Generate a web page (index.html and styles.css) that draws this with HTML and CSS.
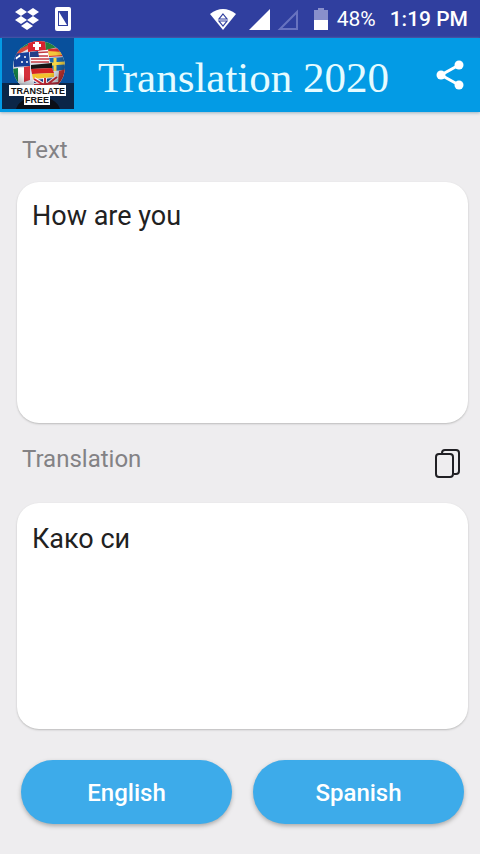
FILE: index.html
```html
<!DOCTYPE html>
<html lang="en">
<head>
    <meta charset="UTF-8">
    <meta name="viewport" content="width=device-width, initial-scale=1.0">
    <title>Translation 2020</title>
    <link rel="stylesheet" href="styles.css">
</head>
<body>
    <div class="status-bar">
        <svg class="dropbox" width="24" height="22" viewBox="0 0 24 22" fill="#fff">
            <path d="M6 0l6 4-6 4-6-4zM18 0l6 4-6 4-6-4zM6 8l6 4-6 4-6-4zM18 8l6 4-6 4-6-4zM12 14l6 4-6 4-6-4z"/>
        </svg>
        <svg class="phone" width="16" height="24" viewBox="0 0 16 24">
            <rect width="16" height="24" rx="2" fill="#fff"/>
            <path d="M3 4h10v15H3z" fill="#303f9f"/>
            <path d="M4 5l8 13H4z" fill="#fff"/>
        </svg>
        <svg class="wifi" width="26" height="21" viewBox="0 0 26 21">
            <path d="M0 5Q13-5 26 5L13 21z" fill="#fff"/>
            <path d="M13 5l4 5H9zM9 12h8l-4 5z" fill="#fff" stroke="#303f9f" stroke-width="1.2"/>
        </svg>
        <svg class="signal" width="21" height="21" viewBox="0 0 21 21">
            <path d="M21 0v21H0z" fill="#fff"/>
        </svg>
        <svg class="signal-empty" width="21" height="21" viewBox="0 0 21 21">
            <path d="M20 3v17H3z" fill="none" stroke="#6873c0" stroke-width="2"/>
        </svg>
        <svg class="battery" width="14" height="22" viewBox="0 0 14 22">
            <path d="M4 0h6v2h4v11H0V2h4z" fill="#8990cb"/>
            <path d="M0 12h14v10H0z" fill="#fff"/>
        </svg>
        <span class="percent">48%</span>
        <span class="clock">1:19 PM</span>
    </div>

    <header>
        <svg class="logo" width="72" height="71" viewBox="0 0 72 71">
            <defs>
                <clipPath id="globe"><circle cx="37" cy="29" r="26"/></clipPath>
                <radialGradient id="shine" cx=".45" cy=".35" r=".65">
                    <stop offset=".6" stop-color="#000" stop-opacity="0"/>
                    <stop offset="1" stop-color="#001" stop-opacity=".4"/>
                </radialGradient>
            </defs>
            <rect width="72" height="71" fill="#08509c"/>
            <path d="M0 45h72v26H0z" fill="#0b2647"/>
            <g clip-path="url(#globe)">
                <path d="M10 2h54v54H10z" fill="#dfe3ea"/>
                <!-- top row -->
                <path d="M10 8l14-6 3 6-15 8z" fill="#1d8a47"/>
                <path d="M12 14l14-7v4L13 18z" fill="#d9473b"/>
                <path d="M26 2h17l1 10-18 2z" fill="#d8232f"/>
                <path d="M33 4h4v8h-4zM31 6h8v3h-8z" fill="#fff"/>
                <path d="M43 2l13 7-12 3z" fill="#25813d"/>
                <path d="M46 11l13-1 4 8-16 1z" fill="#d92b2f"/>
                <path d="M46 13l15 1 1 3-15 1z" fill="#f5c63c"/>
                <!-- middle row -->
                <path d="M11 16l16-2 1 14-16 1z" fill="#16409a"/>
                <path d="M14 20l4-2M18 17l-4 4M23 18v2M20 23v2M25 23v2" stroke="#fff" stroke-width="1.5"/>
                <path d="M28 14l18-2 1 12-18 1z" fill="#fff"/>
                <path d="M28 15l18-1M28 18h18M29 21h18M29 24h18" stroke="#c33a42" stroke-width="1.5"/>
                <path d="M28 14l8-1 1 6h-9z" fill="#263f88"/>
                <path d="M47 20l16-1v13l-12 1z" fill="#1c69b0"/>
                <path d="M53 20v13M48 26l15-1" stroke="#f7d646" stroke-width="3"/>
                <!-- bottom row -->
                <path d="M11 31l5-1v16l-5-3z" fill="#16894b"/>
                <path d="M16 30h6v15h-6z" fill="#fff"/>
                <path d="M22 29l6-1v14l-6 2z" fill="#d4303a"/>
                <path d="M29 27l21-2v5l-21 1z" fill="#171515"/>
                <path d="M29 31l21-1 2 5-22 1z" fill="#d42424"/>
                <path d="M30 36l22-1v4l-21 2z" fill="#f3c22b"/>
                <path d="M32 42l20-2 3 16H32z" fill="#203f8f"/>
                <path d="M32 41l23 14M55 39L34 55M43 40v15M32 47l25-2" stroke="#fff" stroke-width="4"/>
                <path d="M32 41l23 14M55 39L34 55M43 40v15M32 47l25-2" stroke="#cf2c3a" stroke-width="2"/>
                <path d="M57 33l7-2-3 17-5-2z" fill="#d63932"/>
                <circle cx="37" cy="29" r="26" fill="url(#shine)"/>
            </g>
            <path d="M14 71q4-12 22-12t22 12z" fill="#0b0f17"/>
            <path d="M7 47h57v11H7zM22 57h26v10H22z" fill="#fff"/>
            <text x="36" y="56">TRANSLATE</text>
            <text x="35" y="65">FREE</text>
        </svg>
        <h1>Translation 2020</h1>
        <button class="icon-button share" aria-label="Share">
            <svg width="28" height="30" viewBox="0 0 28 30" fill="#fff">
                <path d="M23 5L5 15l18 10" fill="none" stroke="#fff" stroke-width="3"/>
                <circle cx="23" cy="5" r="4.5"/>
                <circle cx="5" cy="15" r="4.5"/>
                <circle cx="23" cy="25" r="4.5"/>
            </svg>
        </button>
    </header>

    <main>
        <label for="source">Text</label>
        <textarea id="source" class="source">How are you</textarea>
        <div class="result-row">
            <label for="result">Translation</label>
            <button class="icon-button" aria-label="Copy translation">
                <svg width="26" height="30" viewBox="0 0 26 30" fill="none" stroke="#202024" stroke-width="2">
                    <path d="M7 4q0-3 3-3h11q3 0 3 3v18q0 3-3 3h-2"/>
                    <rect x="1" y="5" width="17" height="23" rx="3"/>
                </svg>
            </button>
        </div>
        <textarea id="result" class="result" readonly>Како си</textarea>
        <div class="languages">
            <button>English</button>
            <button>Spanish</button>
        </div>
    </main>
</body>
</html>
```
FILE: styles.css
```css
* {
    box-sizing: border-box;
}
body {
    margin: 0;
    min-height: 100vh;
    display: flex;
    flex-direction: column;
    font-family: Roboto, sans-serif;
    background: #eeedef;
}
svg {
    display: block;
    flex: none;
}
button {
    border: none;
    cursor: pointer;
}
.status-bar {
    display: flex;
    align-items: center;
    height: 38px;
    padding: 0 12px 0 15px;
    background: #303f9f;
    color: #fff;
    font-size: 21px;
}
.phone {
    margin-left: 16px;
}
.wifi {
    margin-left: auto;
}
.signal {
    margin-left: 13px;
}
.signal-empty {
    margin-left: 7px;
}
.battery {
    margin-left: 16px;
}
.percent {
    margin-left: 9px;
}
.clock {
    margin-left: 14px;
    font-weight: 500;
}
header {
    display: flex;
    align-items: flex-start;
    height: 74px;
    padding: 0 16px 0 2px;
    background: #039be5;
    box-shadow: 0 1px 3px #9ab4c0;
}
.logo text {
    font-family: "Liberation Sans", sans-serif;
    font-size: 9px;
    font-weight: bold;
    text-anchor: middle;
    fill: #111;
}
h1 {
    flex: 1;
    margin: 0 0 0 24px;
    font-family: "Liberation Serif", serif;
    font-size: 43px;
    font-weight: normal;
    line-height: 80px;
    white-space: nowrap;
    color: #e6fbff;
}
.icon-button {
    display: flex;
    align-items: center;
    justify-content: center;
    height: 38px;
    padding: 0;
    background: none;
}
.share {
    height: 74px;
}
main {
    flex: 1;
    display: flex;
    flex-direction: column;
    padding: 24px 12px 30px 17px;
}
label {
    padding-left: 5px;
    font-size: 24px;
    line-height: 28px;
    color: #838285;
}
textarea {
    width: 100%;
    min-height: 100px;
    padding: 16px 15px;
    border: none;
    border-radius: 22px;
    outline: none;
    resize: none;
    background: #fff;
    box-shadow: 0 1px 2px #bbb;
    font-family: Roboto, sans-serif;
    font-size: 27px;
    line-height: 36px;
    color: #212121;
}
.source {
    flex: 1 1 241px;
    margin-top: 18px;
}
.result {
    flex: 1 1 226px;
    padding-top: 18px;
}
.result-row {
    display: flex;
    justify-content: space-between;
    align-items: flex-start;
    margin: 22px 0 20px;
    padding-right: 7px;
}
.languages {
    display: flex;
    gap: 21px;
    margin-top: 31px;
    padding: 0 4px;
}
.languages button {
    flex: 1;
    height: 64px;
    padding-top: 3px;
    border-radius: 32px;
    background: #3dabea;
    box-shadow: 0 2px 4px #aaa;
    font-family: Roboto, sans-serif;
    font-size: 24px;
    font-weight: 500;
    color: #fff;
}
```
